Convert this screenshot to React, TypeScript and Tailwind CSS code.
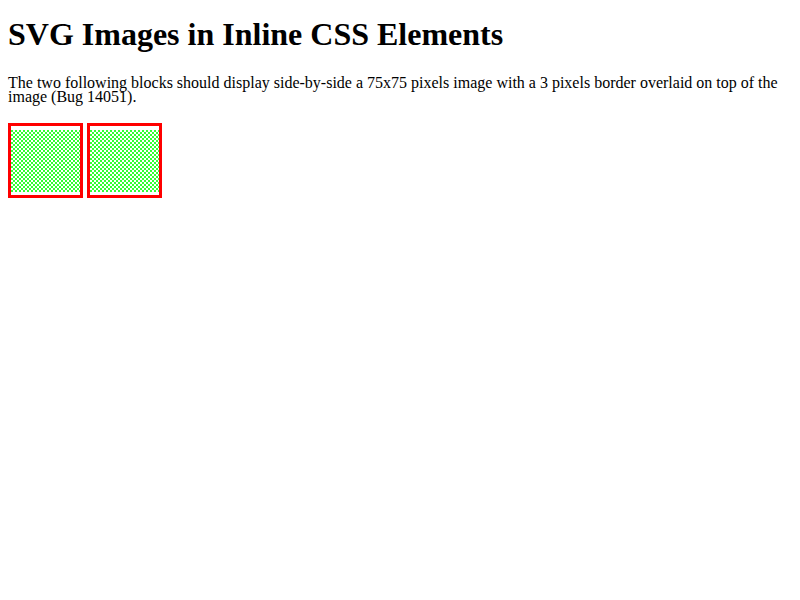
import React from 'react';

const Checker: React.FC = () => (
  <svg className="block" width="69" height="62" xmlns="http://www.w3.org/2000/svg">
    <defs>
      <pattern id="chk" width="4" height="4" patternUnits="userSpaceOnUse">
        <rect width="4" height="4" fill="#ffffff" />
        <rect width="2" height="2" fill="#33ff33" />
        <rect x="2" y="2" width="2" height="2" fill="#33ff33" />
      </pattern>
    </defs>
    <rect width="69" height="62" fill="url(#chk)" />
  </svg>
);

const Block: React.FC = () => (
  <div className="w-[75px] h-[75px] border-[3px] border-[#ff0000] bg-white pt-[4px]">
    <Checker />
  </div>
);

const App: React.FC = () => {
  return (
    <div className="min-h-[600px] bg-white px-2 text-black font-['Liberation_Serif',serif]">
      <h1 className="pt-[16px] text-[32px] font-bold leading-[37px]">SVG Images in Inline CSS Elements</h1>
      <p className="mt-[23px] text-[16px] leading-[14px]">
        The two following blocks should display side-by-side a 75x75 pixels image with a 3 pixels border overlaid on top of the image (Bug 14051).
      </p>
      <div className="mt-[19px] flex gap-[4px]">
        <Block />
        <Block />
      </div>
    </div>
  );
};

export default App;
